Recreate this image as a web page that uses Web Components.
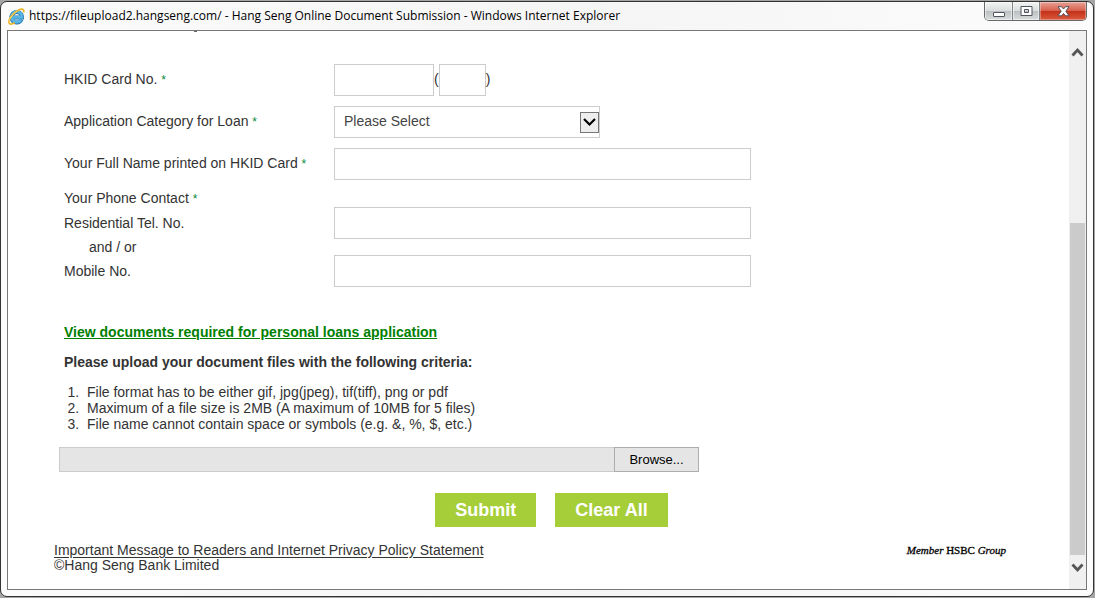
<!DOCTYPE html>
<html lang="en">
<head>
<meta charset="utf-8">
<title>Hang Seng Online Document Submission</title>
<style>
html, body { height: 100%; margin: 0; background: #a5a5a5; }
body { font: 14px/16px "Liberation Sans", Arial, sans-serif; color: #333; }
</style>
</head>
<body>
<browser-window>
  <title-bar slot="title">https://fileupload2.hangseng.com/ - Hang Seng Online Document Submission - Windows Internet Explorer</title-bar>
  <upload-form></upload-form>
  <page-footer></page-footer>
</browser-window>

<script>
const define = (name, html, setup) => customElements.define(name, class extends HTMLElement {
  constructor() {
    super();
    const t = document.createElement('template');
    t.innerHTML = html;
    this.attachShadow({ mode: 'open' }).append(t.content.cloneNode(true));
    if (setup) setup(this, this.shadowRoot);
  }
});

define('title-bar', `
<style>
  :host { display: flex; justify-content: space-between; height: 28px; font: 12px/16px "Open Sans", sans-serif; color: #000; }
  .name { display: flex; align-items: center; gap: 4px; padding-left: 1px; white-space: nowrap; }
  .controls { display: flex; height: 19px; box-sizing: border-box; border: 1px solid #686868; border-top: 0; border-radius: 0 0 5px 5px; overflow: hidden; }
  button { box-sizing: border-box; padding: 0; border: 0; border-right: 1px solid #808388; width: 28px; background: linear-gradient(#f4f4f4, #dadddd 48%, #bcc0c1 52%, #d9dcdd); display: flex; align-items: center; justify-content: center; box-shadow: inset 0 0 0 1px #ffffff88; }
  .max { width: 27px; }
  .close { border: 0; width: 46px; background: linear-gradient(#e8a297, #d7604c 48%, #c43119 52%, #d95a3c); box-shadow: inset 0 0 0 1px #ffffff55; }
  svg { display: block; flex: none; }
</style>
<div class="name">
  <svg width="17" height="17" viewBox="0 0 17 17">
    <path d="M13.500 11.500A5.300 5.300 0 1 1 14 9.400H5" fill="none" stroke="#2677ad" stroke-width="4"/>
    <path d="M13.200 11.500A5.200 5.200 0 1 1 13.900 9.400H5" fill="none" stroke="#58b4e4" stroke-width="2.900"/>
    <path d="M1.700 15.800C-1 13 4 6 9 3 13 .4 16.400.3 15.700 4.500M1.700 15.800c1.500.8 3.500-.2 5.100-1.100" fill="none" stroke="#eab52b" stroke-width="1.700"/>
    <path d="M1.500 14.500C0 12 4.500 6.200 9 3.200" fill="none" stroke="#ffe272" stroke-width=".7"/>
  </svg>
  <span><slot></slot></span>
</div>
<div class="controls">
  <button type="button" aria-label="Minimize"><svg width="14" height="15" viewBox="0 0 14 15"><rect x="1.500" y="8.500" width="11" height="4" rx=".5" fill="#fff" stroke="#51545f"/></svg></button>
  <button type="button" class="max" aria-label="Maximize"><svg width="13" height="11" viewBox="0 0 13 11"><path d="M1 .5h11v9H1zM4.500 3.500h4v3h-4z" fill="#fff" fill-rule="evenodd" stroke="#51545f"/></svg></button>
  <button type="button" class="close" aria-label="Close"><svg width="13" height="11" viewBox="0 0 13 11"><path d="M1 .7h3.500L6.500 3 8.500.7H12L8.800 5.200 12 9.800H8.500L6.500 7.500 4.500 9.800H1L4.200 5.200z" fill="#fff" stroke="#54505d"/></svg></button>
</div>`);

define('scroll-track', `
<style>
  :host { display: grid; grid-template-rows: 192px 1fr 34px; width: 17px; background: #f0f0f0; }
  i { margin: 0 1px; background: #cbcbcb; }
  svg { display: block; margin: 16px 2px 0; }
  .down { margin-top: 8px; }
</style>
<svg width="13" height="10" viewBox="0 0 13 10"><path d="M1.500 8.500 6.500 3l5 5.500" fill="none" stroke="#555" stroke-width="2.800"/></svg>
<i></i>
<svg class="down" width="13" height="10" viewBox="0 0 13 10"><path d="M1.500 1.500l5 5.500 5-5.500" fill="none" stroke="#555" stroke-width="2.800"/></svg>`);

define('browser-window', `
<style>
  :host { display: block; height: 100vh; box-sizing: border-box; padding: 1px 1px 1px 0; }
  .frame { height: 100%; box-sizing: border-box; border: 1px solid #333; border-radius: 7px; background: linear-gradient(90deg, #fbfbfb, #f5f5f5 55%, #fcfcfc); padding: 0 6px 6px; display: flex; flex-direction: column; }
  .view { flex: 1; min-height: 0; display: flex; border: 1px solid #777; background: #fff; overflow: hidden; }
  main { flex: 1; min-width: 0; padding: 0 20px 0 46px; }
  .cut { height: 1px; width: 3px; margin-left: 140px; background: #666; }
</style>
<div class="frame">
  <slot name="title"></slot>
  <div class="view"><main><div class="cut"></div><slot></slot></main><scroll-track></scroll-track></div>
</div>`);

define('form-row', `
<style>
  :host { display: grid; grid-template-columns: 270px 1fr; align-items: center; min-height: var(--row, 32px); }
  .req { color: #0a8a3a; font-size: 12px; line-height: 1; }
  .field { display: flex; align-items: center; }
  label, .paren { white-space: nowrap; padding-bottom: var(--lift, 0); }
  input, .select { box-sizing: border-box; height: 32px; border: 1px solid #ccc; padding: 0 9px; margin: 0; background: #fff; font: inherit; color: inherit; outline: 0; }
  input { width: 417px; }
  .id { width: 100px; }
  .check { width: 47px; }
  .select { display: flex; align-items: center; width: 266px; padding: 0; position: relative; }
  select { appearance: none; width: 100%; height: 30px; border: 0; background: none; padding: 0 9px var(--lift, 0); font: inherit; color: #444; }
  .arrow { position: absolute; right: 0; top: 5px; pointer-events: none; }
</style>
<label for="f"></label><div class="field"></div>`, (el, root) => {
  const label = root.querySelector('label'), field = root.querySelector('.field');
  label.textContent = el.getAttribute('label') + ' ';
  if (el.hasAttribute('required')) label.insertAdjacentHTML('beforeend', '<span class="req">*</span>');
  field.innerHTML = {
    id: '<input class="id" id="f"><span class="paren">(</span><input class="check" aria-label="Check digit"><span class="paren">)</span>',
    select: '<div class="select"><select id="f"><option>Please Select</option></select><svg class="arrow" width="19" height="21" viewBox="0 0 19 21"><rect x=".5" y=".5" width="18" height="20" fill="#eee" stroke="#777"/><path d="M4 7l5.500 5.500L15 7" fill="none" stroke="#000" stroke-width="2.200"/></svg></div>',
    text: '<input id="f">',
    none: ''
  }[el.getAttribute('type')];
  if (el.getAttribute('type') === 'none') label.removeAttribute('for');
});

define('file-picker', `
<style>
  :host { display: flex; width: 640px; height: 25px; }
  input { flex: 1; min-width: 0; box-sizing: border-box; border: 1px solid #ccc; border-right: 0; background: #e5e5e5; padding: 0 4px; margin: 0; }
  button { width: 85px; border: 1px solid #adadad; background: #e5e5e5; font: 13px/16px "Liberation Sans", Arial, sans-serif; color: #000; padding: 0; }
</style>
<input readonly aria-label="Document file"><button type="button">Browse...</button>`);

define('action-button', `
<style>
  :host { display: block; }
  button { height: 34px; padding: 0 20px; border: 0; background: #a6ce39; color: #fff; font: bold 18px/34px "Liberation Sans", Arial, sans-serif; }
</style>
<button type="button"><slot></slot></button>`);

define('upload-form', `
<style>
  :host { display: block; padding-top: 32px; }
  .rows { display: grid; gap: 10px; padding-left: 10px; --lift: 2px; }
  .phone { padding: 10px 0 0 10px; }
  .heading { --row: 17px; --lift: 1px; }
  .or { margin: 0 25px; }
  .intro { padding: 37px 0 0 10px; font-weight: bold; }
  a { color: #008000; }
  p { margin: 14px 0; }
  ol { margin: 0; padding-left: 33px; }
  li::marker { content: counter(list-item) ".\\00a0\\00a0"; }
  file-picker { margin: 15px 0 0 5px; }
  .actions { display: flex; justify-content: center; gap: 19px; margin-top: 21px; }
</style>
<div class="rows">
  <form-row type="id" label="HKID Card No." required></form-row>
  <form-row type="select" label="Application Category for Loan" required></form-row>
  <form-row type="text" label="Your Full Name printed on HKID Card" required></form-row>
</div>
<div class="phone">
  <form-row class="heading" type="none" label="Your Phone Contact" required></form-row>
  <form-row type="text" label="Residential Tel. No."></form-row>
  <div class="or">and / or</div>
  <form-row type="text" label="Mobile No."></form-row>
</div>
<div class="intro">
  <a href="#">View documents required for personal loans application</a>
  <p>Please upload your document files with the following criteria:</p>
</div>
<ol>
  <li>File format has to be either gif, jpg(jpeg), tif(tiff), png or pdf</li>
  <li>Maximum of a file size is 2MB (A maximum of 10MB for 5 files)</li>
  <li>File name cannot contain space or symbols (e.g. &amp;, %, $, etc.)</li>
</ol>
<file-picker></file-picker>
<div class="actions"><action-button>Submit</action-button><action-button>Clear All</action-button></div>`);

define('page-footer', `
<style>
  :host { display: flex; justify-content: space-between; padding: 16px 43px 0 0; line-height: 15px; }
  a { color: inherit; text-underline-offset: 2px; }
  .member { font: 11px/15px "Liberation Serif", "Times New Roman", serif; color: #000; -webkit-text-stroke: 0.3px #000; }
</style>
<div><a href="#">Important Message to Readers and Internet Privacy Policy Statement</a><br>©Hang Seng Bank Limited</div>
<div class="member"><i>Member</i> HSBC <i>Group</i></div>`);
</script>
</body>
</html>
